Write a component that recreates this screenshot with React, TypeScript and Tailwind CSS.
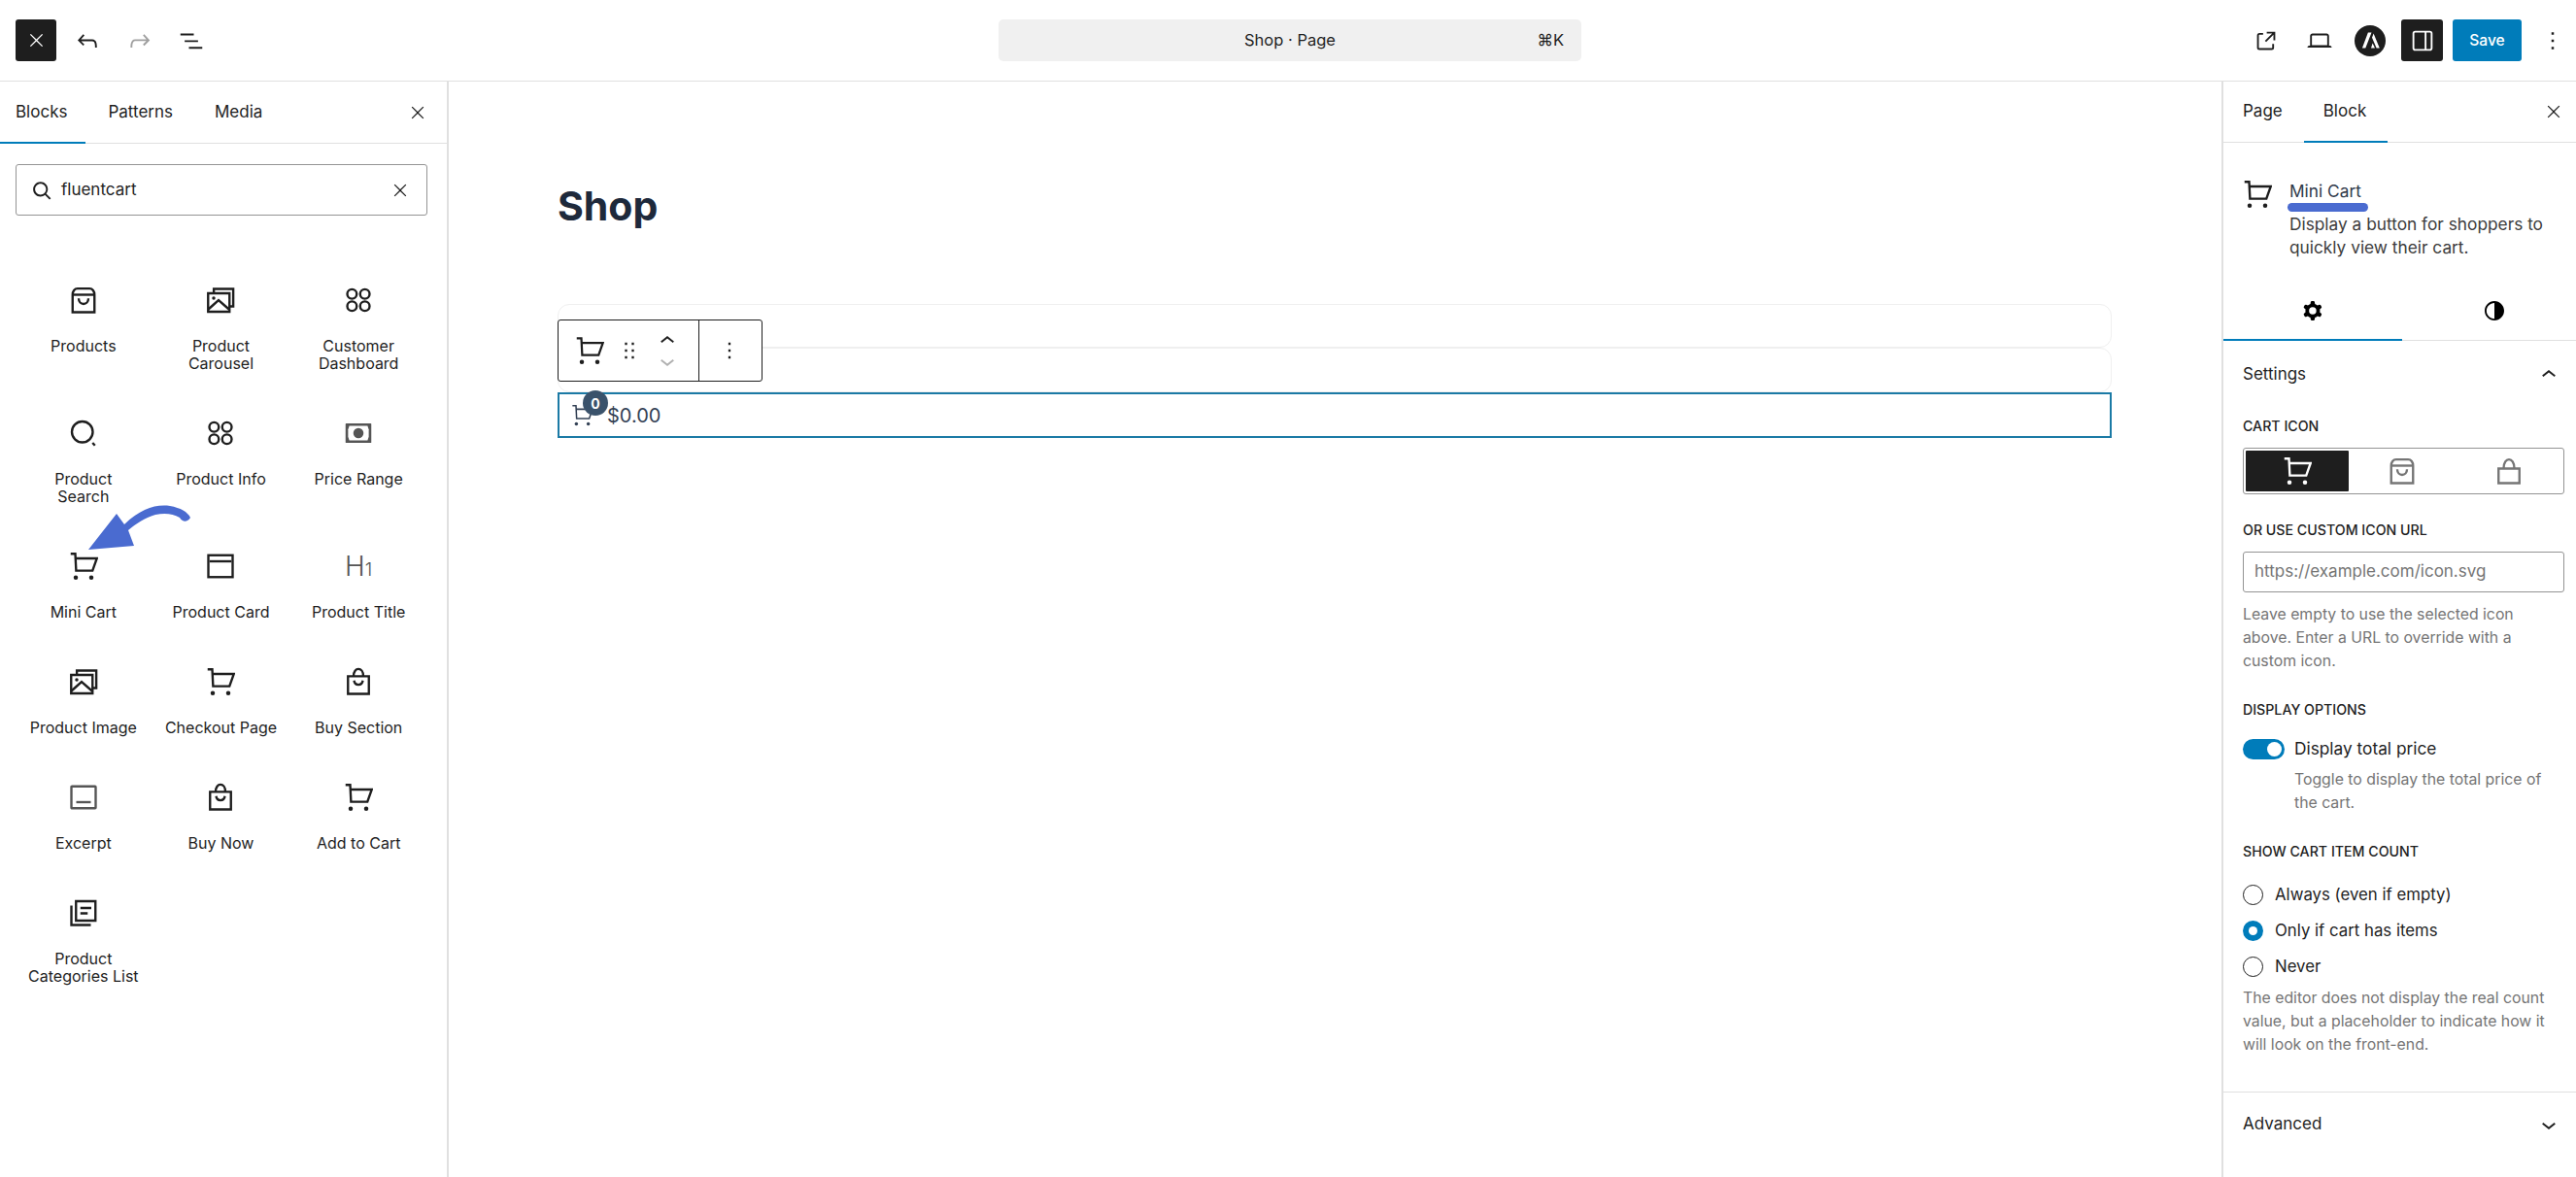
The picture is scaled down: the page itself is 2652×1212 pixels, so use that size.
import React from 'react';

const P = ({ d, className = '', size = 30, evenOdd = false }: { d: string; className?: string; size?: number; evenOdd?: boolean }) => (
  <svg viewBox="0 0 24 24" width={size} height={size} className={`shrink-0 ${className}`} fill="currentColor">
    <path d={d} fillRule={evenOdd ? 'evenodd' : 'nonzero'} />
  </svg>
);

const closeD = 'm13.06 12 6.47-6.47-1.06-1.06L12 10.94 5.53 4.47 4.47 5.53 10.94 12l-6.47 6.47 1.06 1.06L12 13.06l6.47 6.47 1.06-1.06L13.06 12Z';
const undoD = 'M18.3 11.7c-.6-.6-1.4-.9-2.3-.9H6.7l2.9-3.3-1.1-1-4.5 5L8.5 16l1-1-2.7-2.7H16c.5 0 .9.2 1.3.5 1 1 1 3.4 1 4.5v.3h1.5v-.2c0-1.5 0-4.3-1.5-5.7z';
const redoD = 'M15.6 6.5l-1.1 1 2.9 3.3H8c-.9 0-1.7.3-2.3.9-1.4 1.5-1.4 4.2-1.4 5.6v.2h1.5v-.3c0-1.1 0-3.5 1-4.5.3-.3.7-.5 1.3-.5h9.2L14.5 15l1.1 1.1 4.6-4.6-4.6-5z';
const listD = 'M3 6h11v1.5H3V6Zm3.5 5.5h11V13h-11v-1.5ZM21 17H10v1.5h11V17Z';
const externalD = 'M19.5 4.5h-7V6h4.44l-5.97 5.97 1.06 1.06L18 7.06v4.44h1.5v-7Zm-13 1a2 2 0 0 0-2 2v10a2 2 0 0 0 2 2h10a2 2 0 0 0 2-2v-3H17v3a.5.5 0 0 1-.5.5h-10a.5.5 0 0 1-.5-.5v-10a.5.5 0 0 1 .5-.5h3V5.5h-3Z';
const laptopD = 'M20.5 16h-.7V8c0-1.1-.9-2-2-2H6.2c-1.1 0-2 .9-2 2v8h-.7c-.8 0-1.5.7-1.5 1.5h20c0-.8-.7-1.5-1.5-1.5zM5.7 8c0-.3.2-.5.5-.5h11.6c.3 0 .5.2.5.5v7.6H5.7V8z';
const moreD = 'M13 19h-2v-2h2v2zm0-6h-2v-2h2v2zm0-6h-2V5h2v2z';
const cogD = 'M10.289 4.836A1 1 0 0111.275 4h1.306a1 1 0 01.987.836l.244 1.466c.787.26 1.503.679 2.108 1.218l1.393-.522a1 1 0 011.216.437l.653 1.13a1 1 0 01-.23 1.273l-1.148.944a6.025 6.025 0 010 2.435l1.149.946a1 1 0 01.23 1.272l-.653 1.13a1 1 0 01-1.216.437l-1.394-.522c-.605.54-1.32.958-2.108 1.218l-.244 1.466a1 1 0 01-.987.836h-1.306a1 1 0 01-.986-.836l-.244-1.466a5.995 5.995 0 01-2.108-1.218l-1.394.522a1 1 0 01-1.217-.436l-.653-1.131a1 1 0 01.23-1.272l1.149-.946a6.026 6.026 0 010-2.435l-1.148-.944a1 1 0 01-.23-1.272l.653-1.131a1 1 0 011.217-.437l1.393.522a5.994 5.994 0 012.108-1.218l.244-1.466zM14.929 12a3 3 0 11-6 0 3 3 0 016 0z';
const halfD = 'M12 4c-4.4 0-8 3.6-8 8s3.6 8 8 8 8-3.6 8-8-3.6-8-8-8zm0 14.5c-3.6 0-6.5-2.9-6.5-6.5S8.4 5.5 12 5.5v13z';
const upD = 'M6.5 12.4L12 8l5.5 4.4-.9 1.2L12 10l-4.5 3.6-1-1.2z';
const downD = 'M17.5 11.6L12 16l-5.5-4.4.9-1.2L12 14l4.5-3.6 1 1.2z';
const dragD = 'M8 7h2V5H8v2zm0 6h2v-2H8v2zm0 6h2v-2H8v2zm6-14v2h2V5h-2zm0 8h2v-2h-2v2zm0 6h2v-2h-2v2z';

// line drawn icons, all on the same 24 grid
const Line = ({ children, className = '', size = 30, sw = 1.9 }: { children: React.ReactNode; className?: string; size?: number; sw?: number }) => (
  <svg viewBox="0 0 24 24" width={size} height={size} fill="none" stroke="currentColor" strokeWidth={sw} className={`shrink-0 ${className}`}>
    {children}
  </svg>
);

const CartIcon = ({ className = '', size = 30, sw = 1.9 }: { className?: string; size?: number; sw?: number }) => (
  <Line className={className} size={size} sw={sw}>
    <path d="M1.4 1.8h3.8l.7 13.9h13.5L23 5.6H5.4" />
    <circle cx="5.6" cy="21.3" r="1.8" fill="currentColor" stroke="none" />
    <circle cx="18.4" cy="21.3" r="1.8" fill="currentColor" stroke="none" />
  </Line>
);
const BagIcon = ({ className = '', size = 30 }: { className?: string; size?: number }) => (
  <Line className={className} size={size}>
    <path d="M3 7.5C3 5 4.6 2.5 7 2.5h10c2.4 0 4 2.5 4 5V22H3V7.5Z" />
    <path d="M3 7.6h18" />
    <path d="M8 10.5c0 6.2 8 6.2 8 0" />
  </Line>
);
const ShopBagIcon = () => (
  <Line>
    <path d="M3.4 7.5h17.2V22H3.4z" />
    <path d="M8 7.5c0-8 8-8 8 0" />
    <path d="M8.4 11c.6 4.6 6.6 4.6 7.2 0" />
  </Line>
);
const LockBagIcon = ({ className = '' }: { className?: string }) => (
  <Line className={className}>
    <path d="M3.4 10h17.2V22H3.4z" />
    <path d="M7.6 10c0-10 8.8-10 8.8 0" />
  </Line>
);
const ImagesIcon = () => (
  <Line>
    <path d="M6.5 6V2.8h16v14.4h-3" />
    <path d="M1.8 6.4h17.6v15.2H1.8z" />
    <path d="M2 19.6l8.4-7.6 8.6 7.6" />
    <circle cx="6.4" cy="10.4" r="1.4" fill="currentColor" stroke="none" />
  </Line>
);
const CirclesIcon = () => (
  <Line>
    <circle cx="6.7" cy="7" r="3.9" />
    <circle cx="17.3" cy="7" r="3.9" />
    <circle cx="6.7" cy="17" r="3.9" />
    <circle cx="17.3" cy="17" r="3.9" />
  </Line>
);
const LensIcon = () => (
  <Line>
    <circle cx="11" cy="11" r="8.6" />
    <path d="M19.4 20l2 2.2" />
  </Line>
);
const PriceIcon = () => (
  <svg viewBox="0 0 24 24" width={30} height={30} className="shrink-0">
    <rect x="1.4" y="4" width="21.2" height="16" fill="#555" rx="0.5" />
    <path d="M4.5 6h15l1 3v6l-1 3h-15l-1-3V9z" fill="#fff" />
    <circle cx="12" cy="12" r="4.2" fill="#555" />
  </svg>
);
const CardIcon = () => (
  <Line>
    <rect x="2" y="3" width="20" height="18" />
    <path d="M3 8h18" />
  </Line>
);
const HeadingIcon = () => (
  <span className="flex h-[30px] w-[30px] items-baseline justify-center text-[#555] text-[28px] leading-[30px] font-light">
    H<span className="text-[19px]">1</span>
  </span>
);
const ExcerptIcon = () => (
  <Line className="text-[#555]">
    <rect x="2" y="3" width="20" height="18" rx="0.5" />
    <path d="M6 16h12" />
  </Line>
);
const ListCatIcon = () => (
  <Line>
    <path d="M5.8 2.4h16v16h-16z" />
    <path d="M2 6v16h16" />
    <path d="M9.4 8h9M9.4 12.4h6" />
  </Line>
);

type Block = { label: string; icon: React.ReactNode };
const blocks: Block[] = [
  { label: 'Products', icon: <BagIcon /> },
  { label: 'Product\nCarousel', icon: <ImagesIcon /> },
  { label: 'Customer\nDashboard', icon: <CirclesIcon /> },
  { label: 'Product\nSearch', icon: <LensIcon /> },
  { label: 'Product Info', icon: <CirclesIcon /> },
  { label: 'Price Range', icon: <PriceIcon /> },
  { label: 'Mini Cart', icon: <CartIcon /> },
  { label: 'Product Card', icon: <CardIcon /> },
  { label: 'Product Title', icon: <HeadingIcon /> },
  { label: 'Product Image', icon: <ImagesIcon /> },
  { label: 'Checkout Page', icon: <CartIcon /> },
  { label: 'Buy Section', icon: <ShopBagIcon /> },
  { label: 'Excerpt', icon: <ExcerptIcon /> },
  { label: 'Buy Now', icon: <ShopBagIcon /> },
  { label: 'Add to Cart', icon: <CartIcon /> },
  { label: 'Product\nCategories List', icon: <ListCatIcon /> },
];

const Header = () => (
  <header className="flex h-[84px] shrink-0 items-center border-b border-[#e0e0e0] pl-4 pr-2 text-[#1e1e1e]">
    <div className="flex h-[43px] w-[42px] items-center justify-center rounded-[3px] bg-[#1e1e1e] text-white">
      <P d={closeD} size={21} />
    </div>
    <P d={undoD} className="ml-[17px]" />
    <P d={redoD} className="ml-[24px] text-[#a0a0a0]" />
    <P d={listD} className="ml-[23px]" />
    <div className="relative ml-[816px] flex h-[43px] w-[600px] items-center justify-center rounded-[5px] bg-[#f0f0f0] text-[16.5px]">
      Shop · Page
      <span className="absolute right-[18px] text-[16.5px]">⌘K</span>
    </div>
    <P d={externalD} className="ml-[690px]" />
    <P d={laptopD} className="ml-[25px]" />
    <div className="ml-[21px] flex h-8 w-8 items-center justify-center rounded-full bg-[#1e1e1e]">
      <svg viewBox="0 0 32 32" width={32} height={32}>
        <path d="M17.5 7.5h-3.6l-6 16h3.4zM18 12.8l4.6 10.7h3.2l-6.2-15zM18.6 18.6l-1.6 4.9h4z" fill="#fff" />
      </svg>
    </div>
    <div className="ml-4 flex h-[43px] w-[43px] items-center justify-center rounded-[3px] bg-[#1e1e1e] text-white">
      <svg viewBox="0 0 24 24" width={30} height={30} fill="none" stroke="currentColor" strokeWidth="1.5">
        <rect x="4.5" y="4.5" width="15" height="15" rx="1.5" />
        <path d="M14.5 4.5v15" />
      </svg>
    </div>
    <div className="ml-[10px] flex h-[43px] w-[71px] items-center justify-center rounded-[3px] bg-[#007cba] text-[15.6px] font-medium text-white">
      Save
    </div>
    <P d={moreD} className="ml-[17px]" />
  </header>
);

const Inserter = () => (
  <aside className="relative w-[462px] shrink-0 border-r-2 border-[#e0e0e0] text-[#1e1e1e]">
    <div className="relative flex h-[64px] items-center justify-between border-b border-[#e0e0e0] pr-[20px]">
      <div className="flex text-[17px]">
        <span className="ml-4">Blocks</span>
        <span className="ml-[42px]">Patterns</span>
        <span className="ml-[43px]">Media</span>
      </div>
      <P d={closeD} size={20} />
      <div className="absolute bottom-[-1px] left-0 h-[2px] w-[88px] bg-[#007cba]" />
    </div>
    <div className="mx-4 mt-[21px] flex h-[53px] w-[424px] items-center rounded-[3px] border border-[#949494] pl-3 pr-[17px] text-[17px]">
      <svg viewBox="0 0 24 24" width={30} height={30} fill="currentColor" className="-scale-x-100 shrink-0 ml-[-1px]">
        <path d="M13 5c-3.3 0-6 2.7-6 6 0 1.4.5 2.7 1.3 3.7l-3.8 3.8 1.1 1.1 3.8-3.8c1 .8 2.3 1.3 3.7 1.3 3.3 0 6-2.7 6-6S16.3 5 13 5zm0 10.5c-2.5 0-4.5-2-4.5-4.5s2-4.5 4.5-4.5 4.5 2 4.5 4.5-2 4.5-4.5 4.5z" />
      </svg>
      <span className="ml-[5px] flex-1">fluentcart</span>
      <P d={closeD} size={20} />
    </div>
    <div className="mt-[72px] grid w-[440px] grid-cols-3 gap-y-[48px] pl-[15px]">
      {blocks.map((b) => (
        <div key={b.label} className="flex flex-col items-center">
          {b.icon}
          <div className="mt-[23px] whitespace-pre-line text-center text-[16px] leading-[18px]">{b.label}</div>
        </div>
      ))}
    </div>
    {/* hand drawn arrow laid over the block list */}
    <svg className="absolute left-0 top-0" width={220} height={500} viewBox="0 84 220 500">
      <path d="M91 566 120 529 128 540C145 524 160 519 175 521 186 523 193 527 196 533 193 538 188 538 185 533 178 529 170 528 160 530 150 533 140 539 132 546L138 562Z" fill="#4a6bd0" />
    </svg>
  </aside>
);

const Canvas = () => (
  <main className="min-w-0 flex-1 pl-[112px] pr-[113px]">
    <h1 className="mt-[99px] text-[41px] leading-[58px] font-bold text-[#1e293b]">Shop</h1>
    <div className="mt-[72px] h-[45px] rounded-[12px] border border-[#efefef]" />
    <div className="h-[46px] rounded-[12px] border border-[#efefef]" />
    <div className="relative flex h-[47px] items-center border-2 border-[#1b7aa5] pl-3 text-[20px] text-[#334155]">
      <CartIcon size={23} sw={1.6} className="text-[#334155]" />
      <span className="ml-[14px]">$0.00</span>
      <span className="absolute left-[24px] top-[-2px] flex h-[26px] w-[26px] -translate-y-[2px] items-center justify-center rounded-full bg-[#3a526b] text-[14px] font-bold text-white">0</span>
      <div className="absolute left-[-2px] top-[-77px] flex h-[64px] w-[211px] items-center rounded-[3px] border border-[#1e1e1e] bg-white text-[#1e1e1e]">
        <CartIcon size={30} sw={1.8} className="ml-[17px]" />
        <P d={dragD} size={28} className="ml-[12px]" />
        <div className="ml-[10px] flex flex-col items-center">
          <P d={upD} size={30} className="-mb-[9px]" />
          <P d={downD} size={30} className="text-[#b0b0b0]" />
        </div>
        <div className="ml-[17px] h-full w-px bg-[#1e1e1e]" />
        <P d={moreD} size={28} className="ml-[17px]" />
      </div>
    </div>
  </main>
);

const FieldLabel = ({ children, className = '' }: { children: React.ReactNode; className?: string }) => (
  <div className={`text-[14.2px] leading-[18px] font-medium uppercase text-[#1e1e1e] ${className}`}>{children}</div>
);

const Help = ({ children, className = '' }: { children: React.ReactNode; className?: string }) => (
  <p className={`text-[15.8px] leading-[24px] text-[#757575] ${className}`}>{children}</p>
);

const Radio = ({ label, checked = false }: { label: string; checked?: boolean }) => (
  <div className="flex h-[37px] items-center text-[16.8px]">
    {checked ? (
      <span className="flex h-[21px] w-[21px] items-center justify-center rounded-full bg-[#007cba]">
        <span className="h-[9px] w-[9px] rounded-full bg-white" />
      </span>
    ) : (
      <span className="h-[21px] w-[21px] rounded-full border border-[#1e1e1e]" />
    )}
    <span className="ml-3">{label}</span>
  </div>
);

const Settings = () => (
  <aside className="w-[365px] shrink-0 border-l-2 border-[#e0e0e0] text-[#1e1e1e]">
    <div className="relative flex h-[63px] items-center justify-between border-b border-[#e0e0e0] pr-[13px] text-[17px]">
      <div className="flex">
        <span className="ml-[20px]">Page</span>
        <span className="ml-[42px]">Block</span>
      </div>
      <P d={closeD} size={20} />
      <div className="absolute bottom-[-1px] left-[83px] h-[2px] w-[86px] bg-[#007cba]" />
    </div>
    <div className="flex pl-[20px] pr-3 pt-[38px]">
      <CartIcon />
      <div className="relative ml-[18px] text-[17.3px] leading-[24px]">
        <div className="text-[#2f3a4a]">Mini Cart</div>
        <div className="absolute left-[-2px] top-[24px] h-[9px] w-[83px] rounded-full bg-[#4a6bd0]" />
        <p className="mt-[10px] text-[#3c3c3c]">Display a button for shoppers to<br />quickly view their cart.</p>
      </div>
    </div>
    <div className="relative mt-[23px] flex h-[61px] border-b border-[#e0e0e0]">
      <div className="flex w-[184px] items-center justify-center">
        <P d={cogD} evenOdd className="text-black" />
      </div>
      <div className="flex flex-1 items-center justify-center pl-[10px]">
        <P d={halfD} className="text-black" />
      </div>
      <div className="absolute bottom-[-1px] left-0 h-[2px] w-[184px] bg-[#007cba]" />
    </div>
    <div className="flex h-[67px] items-center justify-between pl-[20px] pr-[13px] pt-[2px] text-[17px] font-normal">
      Settings
      <P d={upD} />
    </div>
    <div className="pl-[20px] pr-3">
      <FieldLabel className="mt-[12px]">Cart icon</FieldLabel>
      <div className="mt-[13px] flex h-[48px] rounded-[3px] border border-[#949494] p-[2px]">
        <div className="flex w-[106px] items-center justify-center rounded-[1px] bg-[#1e1e1e] text-white">
          <CartIcon />
        </div>
        <div className="flex w-[110px] items-center justify-center text-[#757575]">
          <BagIcon />
        </div>
        <div className="flex flex-1 items-center justify-center text-[#757575]">
          <LockBagIcon />
        </div>
      </div>
      <FieldLabel className="mt-[28px]">Or use custom icon URL</FieldLabel>
      <div className="mt-[13px] flex h-[42px] items-center rounded-[3px] border border-[#949494] pl-[11px] text-[17px] text-[#757575]">
        https://example.com/icon.svg
      </div>
      <Help className="mt-[11px]">
        Leave empty to use the selected icon<br />above. Enter a URL to override with a<br />custom icon.
      </Help>
      <FieldLabel className="mt-[29px]">Display options</FieldLabel>
      <div className="mt-[19px] flex h-[24px] items-center text-[17.3px]">
        <span className="flex h-[21px] w-[43px] items-center justify-end rounded-full bg-[#007cba] pr-[3px]">
          <span className="h-[15px] w-[15px] rounded-full bg-white" />
        </span>
        <span className="ml-[10px]">Display total price</span>
      </div>
      <Help className="ml-[53px] mt-[8px]">Toggle to display the total price of<br />the cart.</Help>
      <FieldLabel className="mt-[29px]">Show cart item count</FieldLabel>
      <div className="mt-[17px]">
        <Radio label="Always (even if empty)" />
        <Radio label="Only if cart has items" checked />
        <Radio label="Never" />
      </div>
      <Help className="mt-[2px]">
        The editor does not display the real count<br />value, but a placeholder to indicate how it<br />will look on the front-end.
      </Help>
    </div>
    <div className="mt-[36px] flex h-[66px] items-center justify-between border-t border-[#e0e0e0] pl-[20px] pr-[13px] text-[17px] font-normal">
      Advanced
      <P d={downD} />
    </div>
  </aside>
);

export default function App() {
  return (
    <div className="flex h-[1212px] w-[2652px] flex-col overflow-hidden bg-white font-['Inter',sans-serif]">
      <Header />
      <div className="flex min-h-0 flex-1">
        <Inserter />
        <Canvas />
        <Settings />
      </div>
    </div>
  );
}
